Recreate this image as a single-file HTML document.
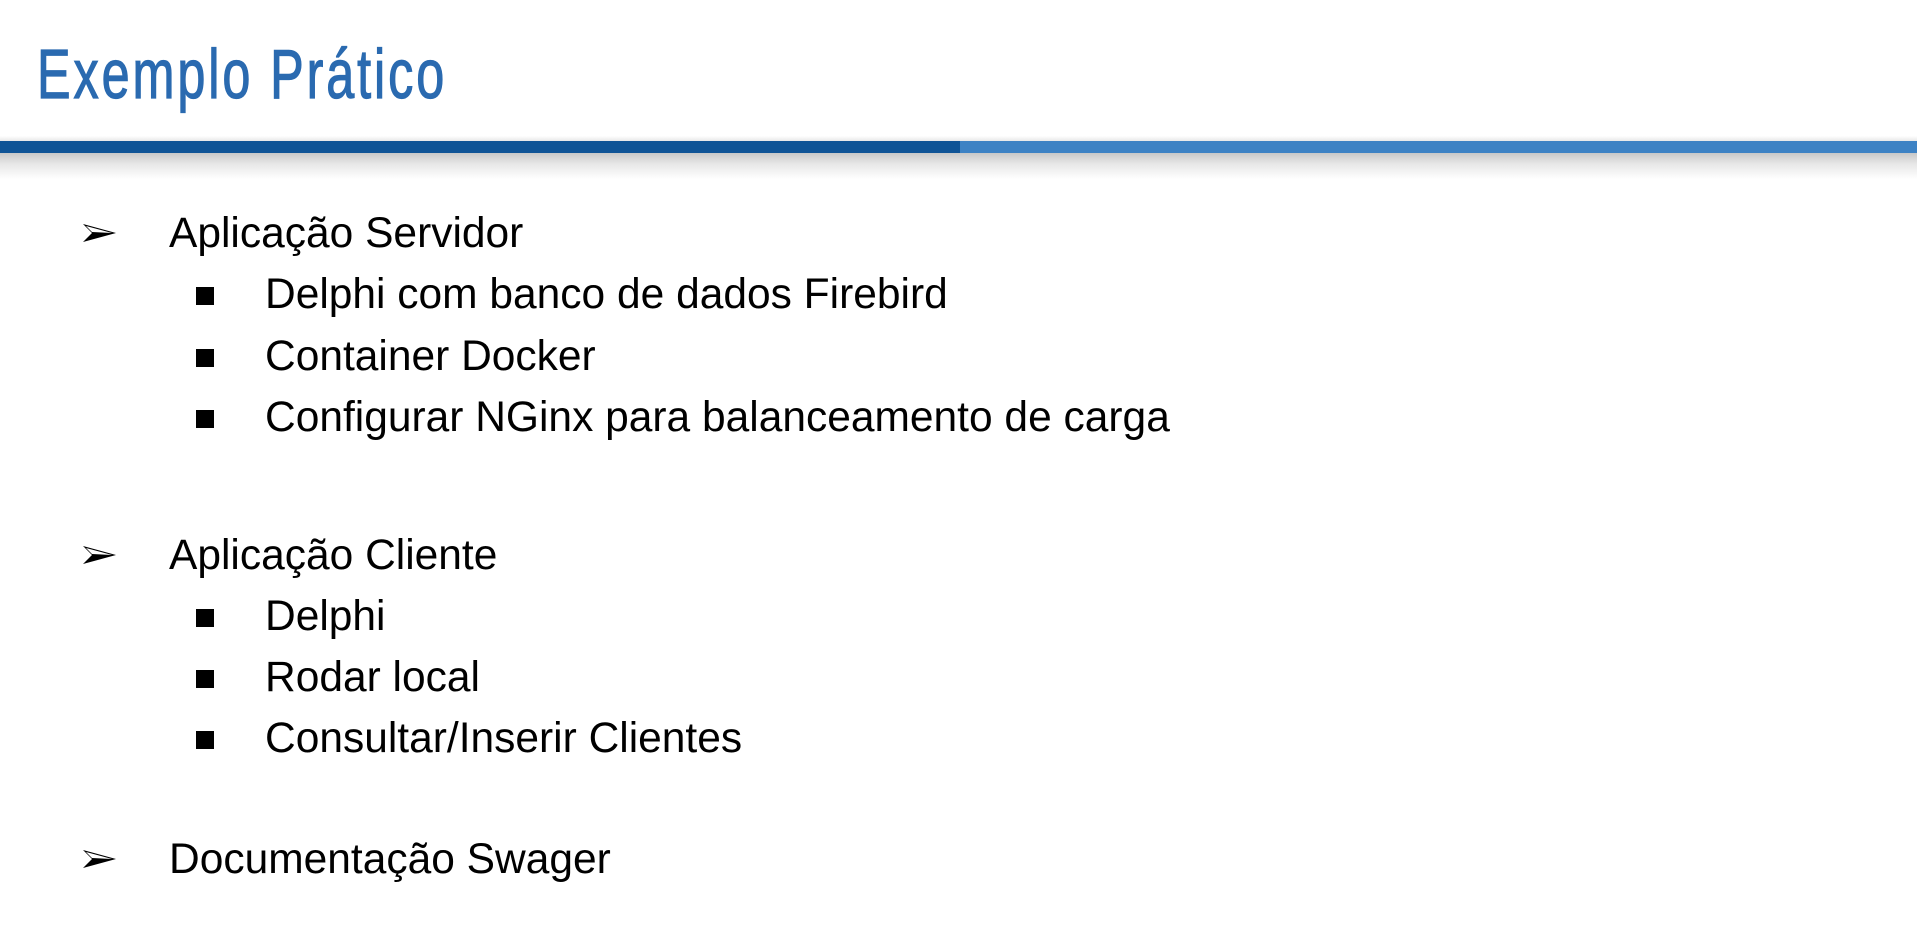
<!DOCTYPE html>
<html><head><meta charset="utf-8"><style>
html,body{margin:0;padding:0;background:#fff;width:1917px;height:934px;overflow:hidden}
svg{display:block}
</style></head><body>
<svg width="1917" height="934" viewBox="0 0 1917 934" xmlns="http://www.w3.org/2000/svg">
<defs>
<linearGradient id="sh" x1="0" y1="0" x2="0" y2="1">
<stop offset="0" stop-color="#c8c8c8"/><stop offset="0.4" stop-color="#e6e6e6"/><stop offset="1" stop-color="#ffffff"/>
</linearGradient>
<linearGradient id="sh2" x1="0" y1="1" x2="0" y2="0">
<stop offset="0" stop-color="#e8e8e8"/><stop offset="1" stop-color="#ffffff"/>
</linearGradient>
</defs>
<rect x="0" y="136" width="1917" height="5" fill="url(#sh2)"/>
<rect x="0" y="153" width="1917" height="26" fill="url(#sh)"/>
<rect x="0" y="141" width="960" height="12" fill="#0f5496"/>
<rect x="960" y="141" width="957" height="12" fill="#3d82c4"/>
<g transform="translate(37,98) scale(0.72,1)">
<text x="0" y="0" font-family="Liberation Sans, sans-serif" font-size="70" letter-spacing="4" fill="#2a6ab0" stroke="#2a6ab0" stroke-width="1.2">Exemplo Prático</text>
</g>
<g font-family="Liberation Sans, Arial, sans-serif" font-size="42.5" fill="#000">
<text x="169" y="247">Aplicação Servidor</text>
<text x="265" y="308">Delphi com banco de dados Firebird</text>
<text x="265" y="370">Container Docker</text>
<text x="265" y="431">Configurar NGinx para balanceamento de carga</text>
<text x="169" y="569">Aplicação Cliente</text>
<text x="265" y="630">Delphi</text>
<text x="265" y="691">Rodar local</text>
<text x="265" y="752">Consultar/Inserir Clientes</text>
<text x="169" y="873">Documentação Swager</text>
</g>
<g fill="#000">
<path id="arr" d="M83 224 L116 233 L83 242 L92 233 Z M86 226 L112 233 L92 232 Z" fill-rule="evenodd"/>
<use href="#arr" y="322"/>
<use href="#arr" y="626"/>
<rect x="196" y="287" width="18" height="18"/>
<rect x="196" y="349" width="18" height="18"/>
<rect x="196" y="410" width="18" height="18"/>
<rect x="196" y="609" width="18" height="18"/>
<rect x="196" y="670" width="18" height="18"/>
<rect x="196" y="731" width="18" height="18"/>
</g>
</svg>
</body></html>
